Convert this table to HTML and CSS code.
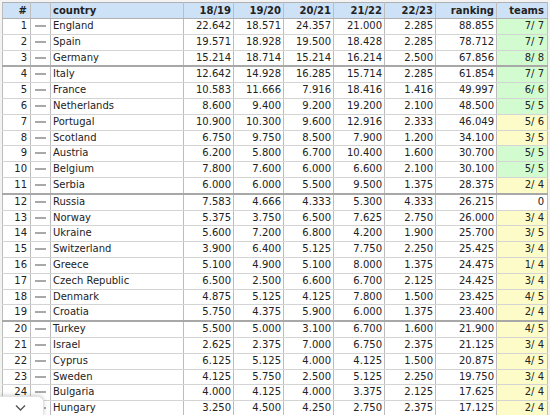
FILE: index.html
```html
<!DOCTYPE html>
<html>
<head>
<meta charset="utf-8">
<link rel="stylesheet" href="styles.css">
</head>
<body>
<table class="coef">
<colgroup>
<col class="c-rank"><col class="c-chg"><col class="c-country">
<col class="c-s"><col class="c-s"><col class="c-s"><col class="c-s2"><col class="c-s2">
<col class="c-total"><col class="c-teams">
</colgroup>
<thead>
<tr><th class="num">#</th><th></th><th class="txt">country</th><th class="num">18/19</th><th class="num">19/20</th><th class="num">20/21</th><th class="num">21/22</th><th class="num">22/23</th><th class="num">ranking</th><th class="num">teams</th></tr>
</thead>
<tbody>
<tr><td class="num">1</td><td class="chg"><span class="dash"></span></td><td class="txt">England</td><td class="num">22.642</td><td class="num">18.571</td><td class="num">24.357</td><td class="num">21.000</td><td class="num">2.285</td><td class="num">88.855</td><td class="num full">7/ 7</td></tr>
<tr><td class="num">2</td><td class="chg"><span class="dash"></span></td><td class="txt">Spain</td><td class="num">19.571</td><td class="num">18.928</td><td class="num">19.500</td><td class="num">18.428</td><td class="num">2.285</td><td class="num">78.712</td><td class="num full">7/ 7</td></tr>
<tr class="sep"><td class="num">3</td><td class="chg"><span class="dash"></span></td><td class="txt">Germany</td><td class="num">15.214</td><td class="num">18.714</td><td class="num">15.214</td><td class="num">16.214</td><td class="num">2.500</td><td class="num">67.856</td><td class="num full">8/ 8</td></tr>
<tr><td class="num">4</td><td class="chg"><span class="dash"></span></td><td class="txt">Italy</td><td class="num">12.642</td><td class="num">14.928</td><td class="num">16.285</td><td class="num">15.714</td><td class="num">2.285</td><td class="num">61.854</td><td class="num full">7/ 7</td></tr>
<tr><td class="num">5</td><td class="chg"><span class="dash"></span></td><td class="txt">France</td><td class="num">10.583</td><td class="num">11.666</td><td class="num">7.916</td><td class="num">18.416</td><td class="num">1.416</td><td class="num">49.997</td><td class="num full">6/ 6</td></tr>
<tr><td class="num">6</td><td class="chg"><span class="dash"></span></td><td class="txt">Netherlands</td><td class="num">8.600</td><td class="num">9.400</td><td class="num">9.200</td><td class="num">19.200</td><td class="num">2.100</td><td class="num">48.500</td><td class="num full">5/ 5</td></tr>
<tr><td class="num">7</td><td class="chg"><span class="dash"></span></td><td class="txt">Portugal</td><td class="num">10.900</td><td class="num">10.300</td><td class="num">9.600</td><td class="num">12.916</td><td class="num">2.333</td><td class="num">46.049</td><td class="num part">5/ 6</td></tr>
<tr><td class="num">8</td><td class="chg"><span class="dash"></span></td><td class="txt">Scotland</td><td class="num">6.750</td><td class="num">9.750</td><td class="num">8.500</td><td class="num">7.900</td><td class="num">1.200</td><td class="num">34.100</td><td class="num part">3/ 5</td></tr>
<tr><td class="num">9</td><td class="chg"><span class="dash"></span></td><td class="txt">Austria</td><td class="num">6.200</td><td class="num">5.800</td><td class="num">6.700</td><td class="num">10.400</td><td class="num">1.600</td><td class="num">30.700</td><td class="num full">5/ 5</td></tr>
<tr><td class="num">10</td><td class="chg"><span class="dash"></span></td><td class="txt">Belgium</td><td class="num">7.800</td><td class="num">7.600</td><td class="num">6.000</td><td class="num">6.600</td><td class="num">2.100</td><td class="num">30.100</td><td class="num full">5/ 5</td></tr>
<tr class="sep"><td class="num">11</td><td class="chg"><span class="dash"></span></td><td class="txt">Serbia</td><td class="num">6.000</td><td class="num">6.000</td><td class="num">5.500</td><td class="num">9.500</td><td class="num">1.375</td><td class="num">28.375</td><td class="num part">2/ 4</td></tr>
<tr><td class="num">12</td><td class="chg"><span class="dash"></span></td><td class="txt">Russia</td><td class="num">7.583</td><td class="num">4.666</td><td class="num">4.333</td><td class="num">5.300</td><td class="num">4.333</td><td class="num">26.215</td><td class="num">0</td></tr>
<tr><td class="num">13</td><td class="chg"><span class="dash"></span></td><td class="txt">Norway</td><td class="num">5.375</td><td class="num">3.750</td><td class="num">6.500</td><td class="num">7.625</td><td class="num">2.750</td><td class="num">26.000</td><td class="num part">3/ 4</td></tr>
<tr><td class="num">14</td><td class="chg"><span class="dash"></span></td><td class="txt">Ukraine</td><td class="num">5.600</td><td class="num">7.200</td><td class="num">6.800</td><td class="num">4.200</td><td class="num">1.900</td><td class="num">25.700</td><td class="num part">3/ 5</td></tr>
<tr><td class="num">15</td><td class="chg"><span class="dash"></span></td><td class="txt">Switzerland</td><td class="num">3.900</td><td class="num">6.400</td><td class="num">5.125</td><td class="num">7.750</td><td class="num">2.250</td><td class="num">25.425</td><td class="num part">3/ 4</td></tr>
<tr><td class="num">16</td><td class="chg"><span class="dash"></span></td><td class="txt">Greece</td><td class="num">5.100</td><td class="num">4.900</td><td class="num">5.100</td><td class="num">8.000</td><td class="num">1.375</td><td class="num">24.475</td><td class="num part">1/ 4</td></tr>
<tr><td class="num">17</td><td class="chg"><span class="dash"></span></td><td class="txt">Czech Republic</td><td class="num">6.500</td><td class="num">2.500</td><td class="num">6.600</td><td class="num">6.700</td><td class="num">2.125</td><td class="num">24.425</td><td class="num part">3/ 4</td></tr>
<tr><td class="num">18</td><td class="chg"><span class="dash"></span></td><td class="txt">Denmark</td><td class="num">4.875</td><td class="num">5.125</td><td class="num">4.125</td><td class="num">7.800</td><td class="num">1.500</td><td class="num">23.425</td><td class="num part">4/ 5</td></tr>
<tr class="sep"><td class="num">19</td><td class="chg"><span class="dash"></span></td><td class="txt">Croatia</td><td class="num">5.750</td><td class="num">4.375</td><td class="num">5.900</td><td class="num">6.000</td><td class="num">1.375</td><td class="num">23.400</td><td class="num part">2/ 4</td></tr>
<tr><td class="num">20</td><td class="chg"><span class="dash"></span></td><td class="txt">Turkey</td><td class="num">5.500</td><td class="num">5.000</td><td class="num">3.100</td><td class="num">6.700</td><td class="num">1.600</td><td class="num">21.900</td><td class="num part">4/ 5</td></tr>
<tr><td class="num">21</td><td class="chg"><span class="dash"></span></td><td class="txt">Israel</td><td class="num">2.625</td><td class="num">2.375</td><td class="num">7.000</td><td class="num">6.750</td><td class="num">2.375</td><td class="num">21.125</td><td class="num part">3/ 4</td></tr>
<tr><td class="num">22</td><td class="chg"><span class="dash"></span></td><td class="txt">Cyprus</td><td class="num">6.125</td><td class="num">5.125</td><td class="num">4.000</td><td class="num">4.125</td><td class="num">1.500</td><td class="num">20.875</td><td class="num part">4/ 5</td></tr>
<tr><td class="num">23</td><td class="chg"><span class="dash"></span></td><td class="txt">Sweden</td><td class="num">4.125</td><td class="num">5.750</td><td class="num">2.500</td><td class="num">5.125</td><td class="num">2.250</td><td class="num">19.750</td><td class="num part">3/ 4</td></tr>
<tr><td class="num">24</td><td class="chg"><span class="dash"></span></td><td class="txt">Bulgaria</td><td class="num">4.000</td><td class="num">4.125</td><td class="num">4.000</td><td class="num">3.375</td><td class="num">2.125</td><td class="num">17.625</td><td class="num part">2/ 4</td></tr>
<tr><td class="num">25</td><td class="chg"><span class="dash"></span></td><td class="txt">Hungary</td><td class="num">3.250</td><td class="num">4.500</td><td class="num">4.250</td><td class="num">2.750</td><td class="num">2.375</td><td class="num">17.125</td><td class="num part">2/ 4</td></tr>
</tbody>
</table>
<div class="expander">
<svg width="43" height="20" viewBox="0 0 43 20"><polyline points="16,8.5 20.5,13 25,8.5" fill="none" stroke="#555" stroke-width="1.4"/></svg>
</div>
</body>
</html>
```
FILE: styles.css
```css
html, body {
  margin: 0;
  padding: 0;
  background: #f3f3f3;
  overflow: hidden;
  height: 415px;
}
body {
  padding: 2px 0 0 2px;
  font-family: "DejaVu Sans", Verdana, sans-serif;
  font-size: 10px;
  color: #222;
}
.coef {
  border-collapse: collapse;
  table-layout: fixed;
  width: 545px;
  background: #fff;
}
.c-rank { width: 28px; }
.c-chg { width: 20px; }
.c-country { width: 133px; }
.c-s { width: 50px; }
.c-s2 { width: 51px; }
.c-total { width: 61px; }
.c-teams { width: 51px; }
.coef th, .coef td {
  border-left: 1px solid #bdbdbd;
  border-right: 1px solid #bdbdbd;
  border-top: 1px solid #d4d4d4;
  border-bottom: 1px solid #d4d4d4;
  padding: 0 2px;
  height: 14.8px;
  line-height: 14.8px;
  white-space: nowrap;
  overflow: hidden;
}
.coef th {
  background: #cde1f7;
  font-weight: bold;
  height: 15px;
  line-height: 15px;
  border-top: 1px solid #b0b0b0;
  border-bottom: 1px solid #b0b0b0;
}
.coef .num { text-align: right; }
.coef .txt { text-align: left; }
.coef td:first-child, .coef th:first-child { padding-right: 3px; }
.coef td:last-child, .coef th:last-child { padding-right: 3px; }
.coef tr.sep td { border-bottom: 2px solid #a8a8a8; }
.chg { text-align: center; padding: 0; }
.dash {
  display: inline-block;
  width: 11px;
  height: 2px;
  background: #a9a9a9;
  vertical-align: middle;
}
.full { background: #d2fbd0; }
.part { background: #fdfcc8; }
.expander {
  position: absolute;
  left: 0;
  top: 396px;
  width: 43px;
  height: 20px;
  background: #fff;
  border-radius: 0 6px 0 0;
  border-top: 1px solid #e2e2e2;
  border-right: 1px solid #e2e2e2;
  box-shadow: 0 -1px 4px rgba(0,0,0,0.18);
}
.expander svg { display: block; }
```
